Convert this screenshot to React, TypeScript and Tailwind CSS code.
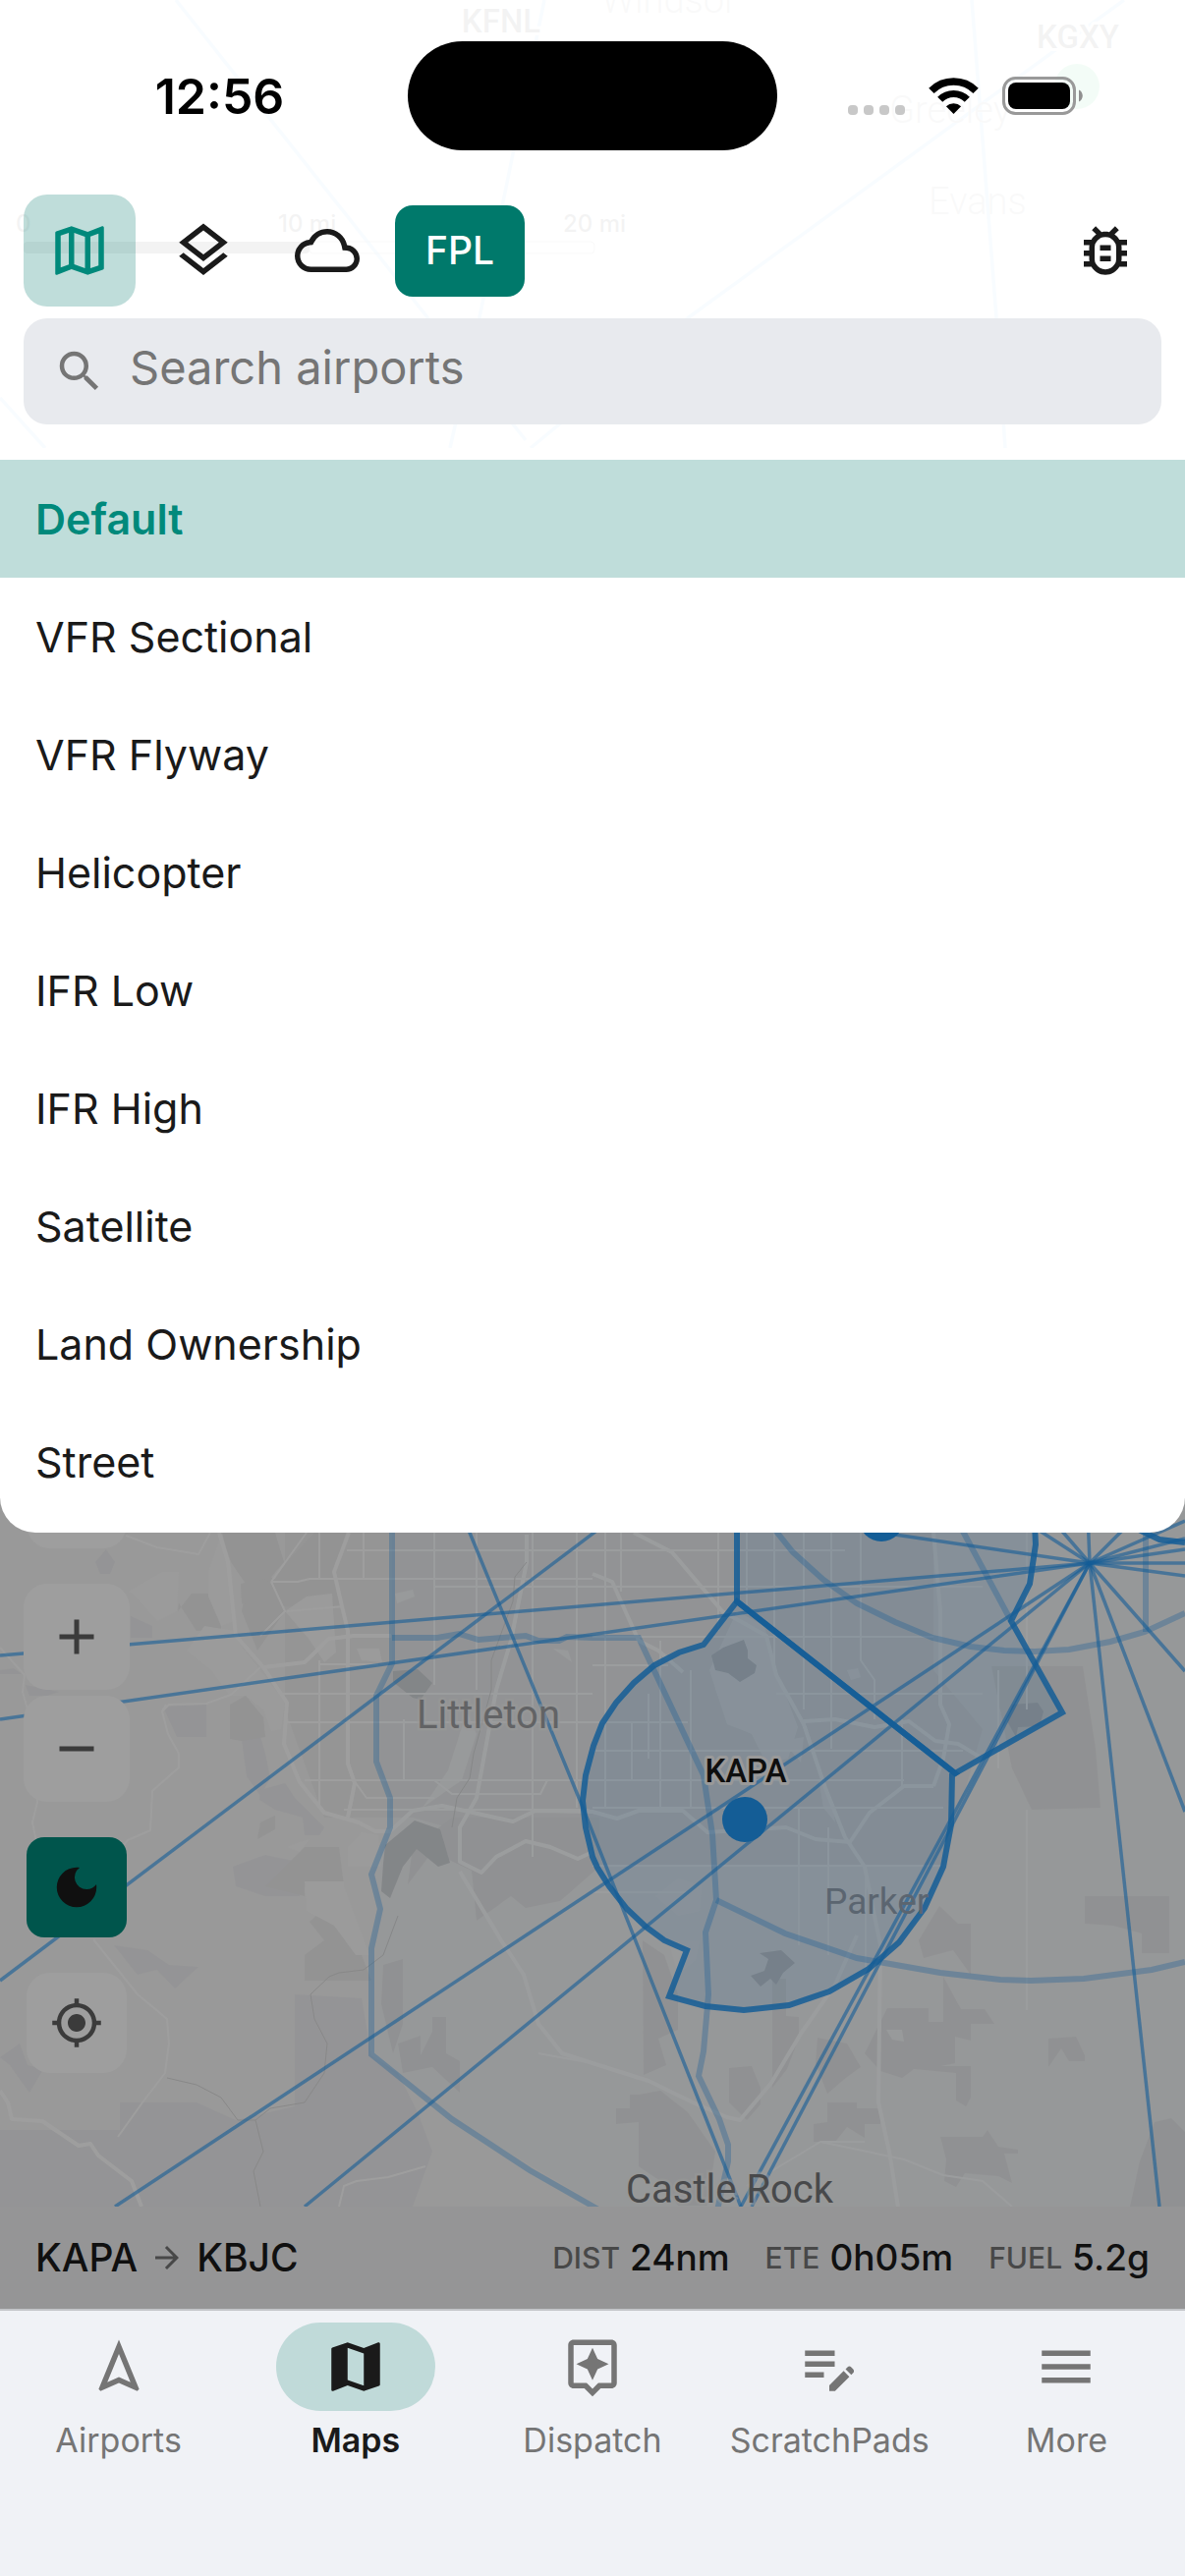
import { useState } from "react";
import type { ReactNode } from "react";
import type { IconType } from "react-icons";
import {
  MdAdd,
  MdArrowForward,
  MdDarkMode,
  MdEditNote,
  MdMap,
  MdMenu,
  MdMyLocation,
  MdOutlineAssistant,
  MdOutlineBugReport,
  MdOutlineCloud,
  MdOutlineLayers,
  MdOutlineMap,
  MdOutlineNavigation,
  MdRemove,
  MdSearch,
} from "react-icons/md";

const mapStyles = [
  "Default",
  "VFR Sectional",
  "VFR Flyway",
  "Helicopter",
  "IFR Low",
  "IFR High",
  "Satellite",
  "Land Ownership",
  "Street",
];

const routeStats = [
  { label: "DIST", value: "24nm" },
  { label: "ETE", value: "0h05m" },
  { label: "FUEL", value: "5.2g" },
];

const tabs: { label: string; icon: IconType }[] = [
  { label: "Airports", icon: MdOutlineNavigation },
  { label: "Maps", icon: MdMap },
  { label: "Dispatch", icon: MdOutlineAssistant },
  { label: "ScratchPads", icon: MdEditNote },
  { label: "More", icon: MdMenu },
];

// Airways that radiate from the VOR
const airways = [
  "M1109 1591L0 1685",
  "M1109 1591L0 1750",
  "M700 1488L0 2016",
  "M1109 1591L117 2246",
  "M1109 1591L310 2246",
  "M440 1456L478 1560L592 1837L754 2246",
  "M1109 1591L754 2246",
  "M1109 1591L765 2246",
  "M1109 1591L1180 2246",
  "M1109 1591L1206 1844",
  "M1109 1591L1206 1701",
  "M897 1560L1109 1591L1206 1604",
  "M1109 1591H1206",
  "M1109 1591L1206 1577",
  "M1109 1591L1206 1566",
  "M1109 1591L1206 1548",
  "M1109 1591L1107 1540",
  "M1109 1591L1160 1540",
  "M1109 1591L1065 1540",
  "M1109 1591L1030 1540",
  "M179 0L435 323L535 448",
  "M554 0L488 323L458 456",
  "M1144 0L701 323L540 456",
  "M989 0L1014 323L1023 456",
  "M0 405L46 456",
];

const classBRings = [
  "M399 1540V1693L383 1726V1793L397 1830V1860L378 1908L387 1943L378 1983V2091L460 2157L539 2209L611 2250",
  "M399 1667H445L467 1663L487 1669L535 1665L548 1670H569L577 1666L603 1667H650L716 1807L725 1867L729 1934L718 1967L721 2030L716 2088L711 2113L732 2157L741 2183V2200L730 2250",
  "M729 1934L799 1968L872 1993L957 2008L1018 2015L1049 2016L1103 2014L1172 2005L1206 1997",
  "M780 1545L791 1560L807 1580L838 1608L872 1632L911 1651L949 1667L988 1676L1022 1680L1053 1681L1088 1679L1130 1671L1165 1661L1206 1642",
  "M970 1540L1029 1650",
  "M1166 1560V1661",
];

const kapaAirspace =
  "M750 1630L716 1674L691 1682L666 1695L645 1713L627 1733L613 1754L604 1777L596 1807L593 1833L596 1860L603 1890L608 1901L620 1920L638 1943L657 1961L676 1975L699 1985L681 2032L718 2042L757 2046L803 2041L844 2027L884 2004L915 1977L941 1942L960 1900L968 1857L969 1807L972 1805Z";
const bkfAirspace =
  "M750 1530V1630L972 1805L1081 1743L1029 1650L1048 1612L1054 1572L1052 1530Z";

const parks = [
  "M255 1595L285 1610L290 1640L262 1680L246 1640Z",
  "M225 1560H280L289 1590L275 1606L250 1612L235 1590Z",
  "M181 1640L195 1622H218L225 1652V1660H200L182 1632Z",
  "M234 1735L250 1726L268 1748L270 1768L246 1772L234 1770Z",
  "M245 1612L262 1608L278 1610L290 1592L320 1560H352L340 1600L350 1635H266L246 1632Z",
  "M265 1855L280 1848V1862L262 1872Z",
  "M310 1880H345L350 1920H310V1930L270 1920Z",
  "M378 2016H310V1990L330 1975L315 1956L345 1930Z",
  "M654 1975L676 1990L690 2030V2066L670 2075L678 2102L655 2112Z",
  "M650 2132L672 2128L700 2150L728 2190L720 2245H690L672 2220L650 2205V2160L627 2162V2146H641V2132Z",
  "M742 2105L765 2103L774 2125V2142L760 2158L742 2140Z",
  "M786 2014H800V2052L813 2053V2074L801 2106L786 2125Z",
  "M903 2044H945V2058H960V2012L978 2045H1002L1012 2060H988V2077L972 2073V2100L958 2103H988V2135L983 2144L973 2138V2110L930 2106L918 2115L896 2108L880 2090Z",
  "M832 2074L862 2080L876 2104L862 2114L842 2131L830 2100Z",
  "M842 2140H872V2146H896V2162H880V2176L862 2165L850 2180H828V2162L842 2160Z",
  "M957 2175H1000L1005 2168L1016 2185L1036 2188V2192H1022L1030 2222L1016 2215L982 2212L973 2226L961 2220L963 2198Z",
  "M1104 1930H1190V1988H1162V1968L1133 1960L1104 1958Z",
  "M1009 1696H1102L1115 1780L1120 1840L1050 1842L1030 1800Z",
  "M390 2000L410 1994V2060L400 2090L388 2040Z",
  "M405 2080L428 2072V2092L440 2068V2053H454V2090L468 2098V2130L440 2104L410 2110Z",
  "M415 1918L440 1885L480 1904L485 1955L520 1930L535 1942L570 1935L610 1900V1850H460L420 1880Z",
  "M956 1940L975 1958H988V2010L970 1985L940 1993L935 1975Z",
  "M1067 2075L1095 2073L1104 2092V2098H1088L1080 2085L1067 2104Z",
  "M1150 2246L1160 2200L1175 2160L1192 2156L1206 2170V2246Z",
];

const forests = [
  "M0 2168H122V2140H200L240 2158L300 2144V2030L368 2034L378 2092L405 2110L425 2150L440 2190L420 2246H0Z",
  "M166 1737L210 1735V1768H180Z",
  "M246 1770L265 1767L270 1785L275 1810L265 1828L251 1808Z",
  "M265 1822L290 1815L300 1830L330 1860L325 1868H310L308 1850L280 1842L264 1832Z",
  "M155 1626H180V1640L165 1645L155 1638Z",
  "M133 1645L155 1655V1667H133Z",
  "M0 1700L14 1698L22 1704H0Z",
  "M97 1590L108 1577L117 1590L112 1602H102Z",
  "M26 1715L60 1722L48 1726H30Z",
  "M116 1980L150 1985L172 2000L202 2002L178 2024L160 2005L140 2010Z",
  "M237 1900L270 1888L302 1895L305 1930H270L240 1920Z",
  "M0 2094L20 2080L28 2102L44 2106L30 2130L10 2102Z",
];

const lightPatches = [
  "M130 1620L165 1600L182 1600L180 1640L160 1650L135 1622Z",
  "M208 1655L240 1660L245 1675L290 1732L286 1760L276 1762L268 1740L250 1726H234L215 1700L190 1680Z",
  "M226 1560L236 1600L238 1650L225 1655L212 1625L212 1600Z",
  "M312 1625L338 1622L342 1682L330 1692L314 1668L290 1640Z",
  "M363 1678H386L389 1692L368 1690Z",
  "M402 1622L420 1618L422 1625L404 1632Z",
  "M563 1678L578 1680L582 1692Z",
  "M430 1840L470 1812L485 1765L475 1742L456 1802Z",
  "M310 1915H350V1920L376 1990H362L340 1960L312 1945Z",
  "M292 1880L305 1875L315 1872L305 1885Z",
  "M722 1700L750 1640L778 1655L790 1700L812 1758L802 1790L780 1795L765 1765L740 1755L730 1725Z",
  "M797 1772L818 1768L815 1794Z",
  "M833 1810L846 1830L850 1855L838 1840Z",
  "M862 1700L873 1698L876 1707L866 1710Z",
  "M667 1930L690 1912L714 1920L712 1945L690 1950Z",
  "M680 1975H712L708 1995L690 2010Z",
  "M902 2066L918 2066L920 2078L908 2076Z",
  "M354 1900H388L385 1868L368 1865L354 1880Z",
];

const lakes = [
  "M400 1701L425 1699L440 1713L428 1730L420 1728L400 1712Z",
  "M392 1878L422 1853L448 1862L458 1896L446 1900L424 1882L410 1900L397 1932L388 1925L390 1897Z",
  "M724 1685L736 1677L757 1669L761 1680V1688L770 1695L768 1703L753 1712L741 1703L728 1700Z",
  "M773 1988L795 1985L809 1998L797 2008L790 2020L784 2014L774 2022L764 2011L778 2006L782 1994Z",
  "M1030 1735L1056 1733L1062 1742L1058 1757L1036 1758L1034 1768L1025 1752Z",
];

const highways = [
  "M223 1560L232 1590L240 1665L268 1697L292 1733L289 1775L305 1814L330 1845L365 1855L382 1864H397L420 1843L450 1838L522 1854L545 1843L603 1844L628 1851L650 1843H695L720 1865L800 1860L830 1872L865 1875L885 1845L920 1818H950",
  "M268 1697L310 1692L335 1668L360 1665H398",
  "M536 1562V1590L520 1670L505 1720L485 1830L468 1860V1895L490 1906L505 1890L535 1874L560 1880L588 1892L603 1885",
  "M355 1560L340 1600L348 1635L354 1660V1795L361 1815L354 1850",
  "M603 1602L623 1610L650 1670L670 1680L695 1702",
  "M645 1560L684 1580L735 1640L780 1665L790 1705L818 1755L840 1820L860 1870L880 1900L896 1980L894 2140L905 2190L914 2246",
  "M950 1560L957 1640V1735L966 1755L960 1790L950 1818",
  "M818 1752L850 1750L890 1758L925 1752L952 1772L975 1775L1000 1790",
  "M468 1905L510 1975L533 2010L548 2060L572 2090L603 2100L660 2118L705 2140L740 2155L753 2158L785 2120L815 2070L850 2020L872 1970",
  "M0 2128L8 2140L12 2157L43 2159L80 2184L92 2182L100 2194L134 2220L144 2246",
];

const streets = [
  "M353 1578H603M322 1607H603M442 1615H1000M325 1694H385M288 1724H603M290 1753H603M603 1666H950M790 1724H1000M603 1695H680",
  "M310 1812H603M350 1842H600M603 1782H980M603 1812H920M603 1578H740M740 1578H860M603 1840H960M603 1899H960M603 1753H700",
  "M325 1560V1607M325 1690V1838M370 1560V1607M442 1560V1715M485 1560V1720M542 1560V1890M587 1560V1840M411 1750V1812",
  "M616 1560V1840M643 1753V1812M672 1670V1840M703 1700V1840M731 1560V1660M760 1560V1640M788 1560V1700M818 1560V1740M846 1560V1780",
  "M876 1560V1690L890 1710V1750M632 1560V1620M660 1724V1790M813 1840V1980M843 1860V1990M881 1900V2010M918 1750V1820M1016 1700V1800",
  "M169 1735L165 1742L171 1765L182 1785V1799L155 1823L153 1863L130 1873L115 1893M165 1742L172 1735L210 1734L235 1725L265 1697M0 1677L25 1705L23 1722L28 1740L38 1834L33 1855L37 1875",
  "M128 1563L160 1575L202 1582L214 1560M276 1610L290 1640L265 1665M276 1610H303L315 1607H370M95 1974L140 2030L170 2055L172 2080L168 2110L145 2140L120 2175",
  "M345 2246L350 2225L363 2220L395 2216L433 2205M548 2090L603 2100M880 2180H835L760 2225M835 2180L920 2198L960 2214L1000 2220L1030 2246",
  "M360 1812L373 1830H442M442 1812L460 1826H550L557 1812H603M1045 1560V1740M1045 1842V2046M603 1926H700M276 1610L312 1560M292 1640L350 1635",
];

function MapCanvas() {
  return (
    <svg
      className="absolute inset-0 h-full w-full"
      viewBox="0 0 1206 2350"
      preserveAspectRatio="xMinYMin slice"
      role="img"
      aria-label="Map of the Denver area"
    >
      <rect width="1206" height="2350" fill="#f7f7f7" />
      <path d="M290 1456H950V1700L1000 1760L960 1900H600L420 1850L330 1850L290 1740Z" fill="#f0f0f0" />
      {forests.map((d) => (
        <path key={d} d={d} fill="#efeff2" />
      ))}
      {parks.map((d) => (
        <path key={d} d={d} fill="#ededed" />
      ))}
      {lightPatches.map((d) => (
        <path key={d} d={d} fill="#fafafa" />
      ))}
      {lakes.map((d) => (
        <path key={d} d={d} fill="#d8dadc" />
      ))}
      <g fill="none" stroke="#ffffff" strokeLinejoin="round">
        {streets.map((d) => (
          <path key={d} d={d} strokeWidth="2" />
        ))}
        {highways.map((d) => (
          <path key={d} d={d} strokeWidth="4" />
        ))}
      </g>
      <g fill="none" stroke="#dcdcdc" strokeWidth="1">
        <path d="M536 1590L524 1605L522 1630L500 1690V1720L482 1785L478 1810L465 1830L460 1860" />
        <path d="M405 1950L390 1990L370 2005L345 2008L335 2012L316 2030L320 2055L333 2080L330 2110L310 2140L275 2146L260 2158L268 2190L258 2210L265 2246" />
        <path d="M170 2115L200 2122L225 2135L242 2158L260 2158" />
      </g>

      {/* Airspace */}
      <path
        d="M399 1500V1693L383 1726V1793L397 1830V1860L378 1908L387 1943L378 1983V2091L460 2157L611 2246H1206V1500Z"
        fill="#2196f3"
        fillOpacity="0.02"
      />
      <g fill="none" stroke="#2196f3" strokeOpacity="0.32" strokeWidth="6">
        {classBRings.map((d) => (
          <path key={d} d={d} />
        ))}
      </g>
      <g fill="none" stroke="#2196f3" strokeOpacity="0.6" strokeWidth="3.5">
        {airways.map((d) => (
          <path key={d} d={d} />
        ))}
      </g>
      <g fill="#2196f3" fillOpacity="0.12" stroke="#2196f3" strokeOpacity="0.85" strokeWidth="6">
        <path d={kapaAirspace} />
        <path d={bkfAirspace} />
      </g>
      <path d="M1155 1555L1180 1567L1206 1570" fill="none" stroke="#2196f3" strokeOpacity="0.85" strokeWidth="6" />

      {/* Places */}
      <g className="font-['Roboto',sans-serif]" paintOrder="stroke" stroke="#f6f6f6" strokeOpacity="0.5">
        <g strokeWidth="5">
          <text x="424" y="1759" fontSize="40" fill="#9fa1a4">Littleton</text>
          <text x="839" y="1948" fill="#93a4b5" fontSize="37" strokeWidth="0">Parker</text>
          <text x="637" y="2242" fill="#757779" fontSize="40">Castle Rock</text>
        </g>
        <g fontSize="38" fill="#8a8c8e" fontWeight="300">
          <text x="612" y="13">Windsor</text>
          <text x="905" y="125">Greeley</text>
          <text x="945" y="218">Evans</text>
        </g>
      </g>

      {/* Airports */}
      <g fill="#2196f3">
        <circle cx="897" cy="1546" r="23" />
        <circle cx="758" cy="1852" r="23" />
        <circle cx="1096" cy="88" r="23" fill="#22c55e" />
      </g>
      <g
        className="font-['Roboto',sans-serif]"
        fontSize="33"
        fontWeight="500"
        textAnchor="middle"
        fill="#171717"
        stroke="#f7f7f7"
        strokeWidth="6"
        strokeLinejoin="round"
        paintOrder="stroke"
      >
        <text x="759" y="1814">KAPA</text>
        <text x="510" y="33">KFNL</text>
        <text x="1097" y="49">KGXY</text>
      </g>

      {/* Scale */}
      <g className="font-['Inter',sans-serif]" fontSize="24" fontWeight="500" fill="#222">
        <text x="16" y="236">0</text>
        <text x="283" y="236">10 mi</text>
        <text x="573" y="236">20 mi</text>
        <rect x="24" y="246" width="291" height="12" rx="4" />
        <rect x="315" y="246" width="290" height="12" rx="4" fill="none" stroke="#222" strokeOpacity="0.5" />
      </g>
    </svg>
  );
}

function StatusBar() {
  return (
    <div className="flex items-center">
      <div className="flex-1 pl-8 text-center text-[50px] leading-none font-semibold text-black">12:56</div>
      <div className="h-[111px] w-[376px] rounded-full bg-black" />
      <div className="flex flex-1 items-center justify-center gap-6 pr-8">
        <div className="flex gap-1.5 self-end">
          {[0, 1, 2, 3].map((dot) => (
            <span key={dot} className="h-2.5 w-2.5 rounded-[4px] bg-[#c8c8c8]" />
          ))}
        </div>
        <svg className="h-[37px] w-[51px]" viewBox="0 0 51 37" aria-label="Wi-Fi">
          <path d="M2.9 13.4A32 32 0 0 1 48.1 13.4" fill="none" stroke="#000" strokeWidth="7.6" />
          <path d="M11.7 22.2A19.5 19.5 0 0 1 39.3 22.2" fill="none" stroke="#000" strokeWidth="7.2" />
          <path d="M25.5 37L17.9 29.2A11 11 0 0 1 33.1 29.2Z" />
        </svg>
        <svg className="h-[39px] w-[82px]" viewBox="0 0 82 39" aria-label="Battery full">
          <rect x="1.5" y="1.5" width="72" height="36" rx="12" fill="none" stroke="#999" strokeWidth="3" />
          <rect x="6" y="6" width="63" height="27" rx="8" />
          <path d="M78 13.5C83 15.5 83 23.5 78 25.5Z" fill="#8f8f8f" />
        </svg>
      </div>
    </div>
  );
}

function ToolButton({ label, active = false, children }: { label: string; active?: boolean; children: ReactNode }) {
  return (
    <button
      type="button"
      aria-label={label}
      aria-pressed={active}
      className={`flex h-[114px] w-[114px] items-center justify-center rounded-3xl ${
        active ? "bg-[#00796b]/25 text-[#00897b]" : "text-[#1a1a1a]"
      }`}
    >
      {children}
    </button>
  );
}

function MapControls() {
  return (
    <div className="relative -mt-[86px] flex w-[156px] flex-col items-center gap-9 text-[#5f5f5f]">
      <div className="h-[102px] w-[102px] rounded-3xl bg-white" />
      <div className="flex flex-col gap-1.5">
        <button type="button" aria-label="Zoom in" className="flex h-[108px] w-[108px] items-center justify-center rounded-3xl bg-white">
          <MdAdd size={60} />
        </button>
        <button type="button" aria-label="Zoom out" className="flex h-[108px] w-[108px] items-center justify-center rounded-3xl bg-white">
          <MdRemove size={60} />
        </button>
      </div>
      <button
        type="button"
        aria-label="Night mode"
        className="flex h-[102px] w-[102px] items-center justify-center rounded-[18px] bg-[#008a7b] text-[#1a1a1a]"
      >
        <MdDarkMode size={54} />
      </button>
      <button type="button" aria-label="My location" className="flex h-[102px] w-[102px] items-center justify-center rounded-3xl bg-white">
        <MdMyLocation size={54} />
      </button>
    </div>
  );
}

function RouteBar() {
  return (
    <div className="relative mt-auto flex h-[104px] items-center justify-between bg-[#f0f1f3] px-9 text-[#1a1a1a]">
      <div className="flex items-center gap-3 text-[39px] font-medium">
        <span>KAPA</span>
        <MdArrowForward size={36} className="text-[#757575]" />
        <span>KBJC</span>
      </div>
      <dl className="flex gap-9">
        {routeStats.map((stat) => (
          <div key={stat.label} className="flex items-center gap-2.5">
            <dt className="text-[30px] font-medium text-[#757575]">{stat.label}</dt>
            <dd className="text-[37px] font-medium">{stat.value}</dd>
          </div>
        ))}
      </dl>
    </div>
  );
}

export default function App() {
  const [selected, setSelected] = useState("Default");

  return (
    <div className="flex min-h-screen flex-col bg-[#f0f2f6] font-['Inter',sans-serif]">
      <main className="relative flex flex-1 flex-col overflow-hidden">
        <MapCanvas />

        <header className="relative bg-white/95 px-6 pt-[42px] pb-6">
          <div className="-mx-6">
            <StatusBar />
          </div>
          <div className="mt-[45px] flex items-center gap-3">
            <ToolButton label="Map style" active>
              <MdOutlineMap size={66} />
            </ToolButton>
            <ToolButton label="Layers">
              <MdOutlineLayers size={66} />
            </ToolButton>
            <ToolButton label="Weather">
              <MdOutlineCloud size={66} />
            </ToolButton>
            <button
              type="button"
              className="h-[93px] w-[132px] rounded-[18px] bg-[#00796b] text-[39px] font-medium text-white"
            >
              FPL
            </button>
            <div className="ml-auto">
              <ToolButton label="Report a bug">
                <MdOutlineBugReport size={66} />
              </ToolButton>
            </div>
          </div>
          <label className="mt-3 flex h-[108px] items-center gap-6 rounded-3xl bg-[#e8eaee] pl-[30px] text-[#757575]">
            <MdSearch size={54} className="shrink-0" />
            <span className="sr-only">Search airports</span>
            <input
              type="search"
              placeholder="Search airports"
              className="w-full min-w-0 bg-transparent pb-2 text-[47px] outline-none placeholder:text-[#757575]"
            />
          </label>
        </header>

        <div className="relative flex flex-1 flex-col">
          <ul className="relative z-20 rounded-b-[36px] bg-white py-3">
            {mapStyles.map((name) => (
              <li key={name}>
                <button
                  type="button"
                  onClick={() => setSelected(name)}
                  className={`flex h-[120px] w-full items-center px-9 text-left text-[43px] ${
                    name === selected ? "bg-[#00796b]/25 font-semibold text-[#00897b]" : "text-[#1a1a1a]"
                  }`}
                >
                  {name}
                </button>
              </li>
            ))}
          </ul>
          <MapControls />
          <RouteBar />
          <div className="absolute inset-0 z-10 bg-black/38" />
        </div>
      </main>

      <nav className="flex border-t-2 border-[#c2c4c8] pt-3 pb-[114px]">
        {tabs.map(({ label, icon: Icon }) => (
          <a
            key={label}
            href="#"
            aria-current={label === "Maps" ? "page" : undefined}
            className={`flex flex-1 basis-0 flex-col items-center gap-1.5 text-[34px] leading-[48px] ${
              label === "Maps" ? "font-semibold text-[#1a1a1a]" : "text-[#757575]"
            }`}
          >
            <span
              className={`flex h-[90px] w-[162px] items-center justify-center rounded-full ${
                label === "Maps" ? "bg-[#c0dad9]" : ""
              }`}
            >
              <Icon size={66} />
            </span>
            {label}
          </a>
        ))}
      </nav>
    </div>
  );
}
